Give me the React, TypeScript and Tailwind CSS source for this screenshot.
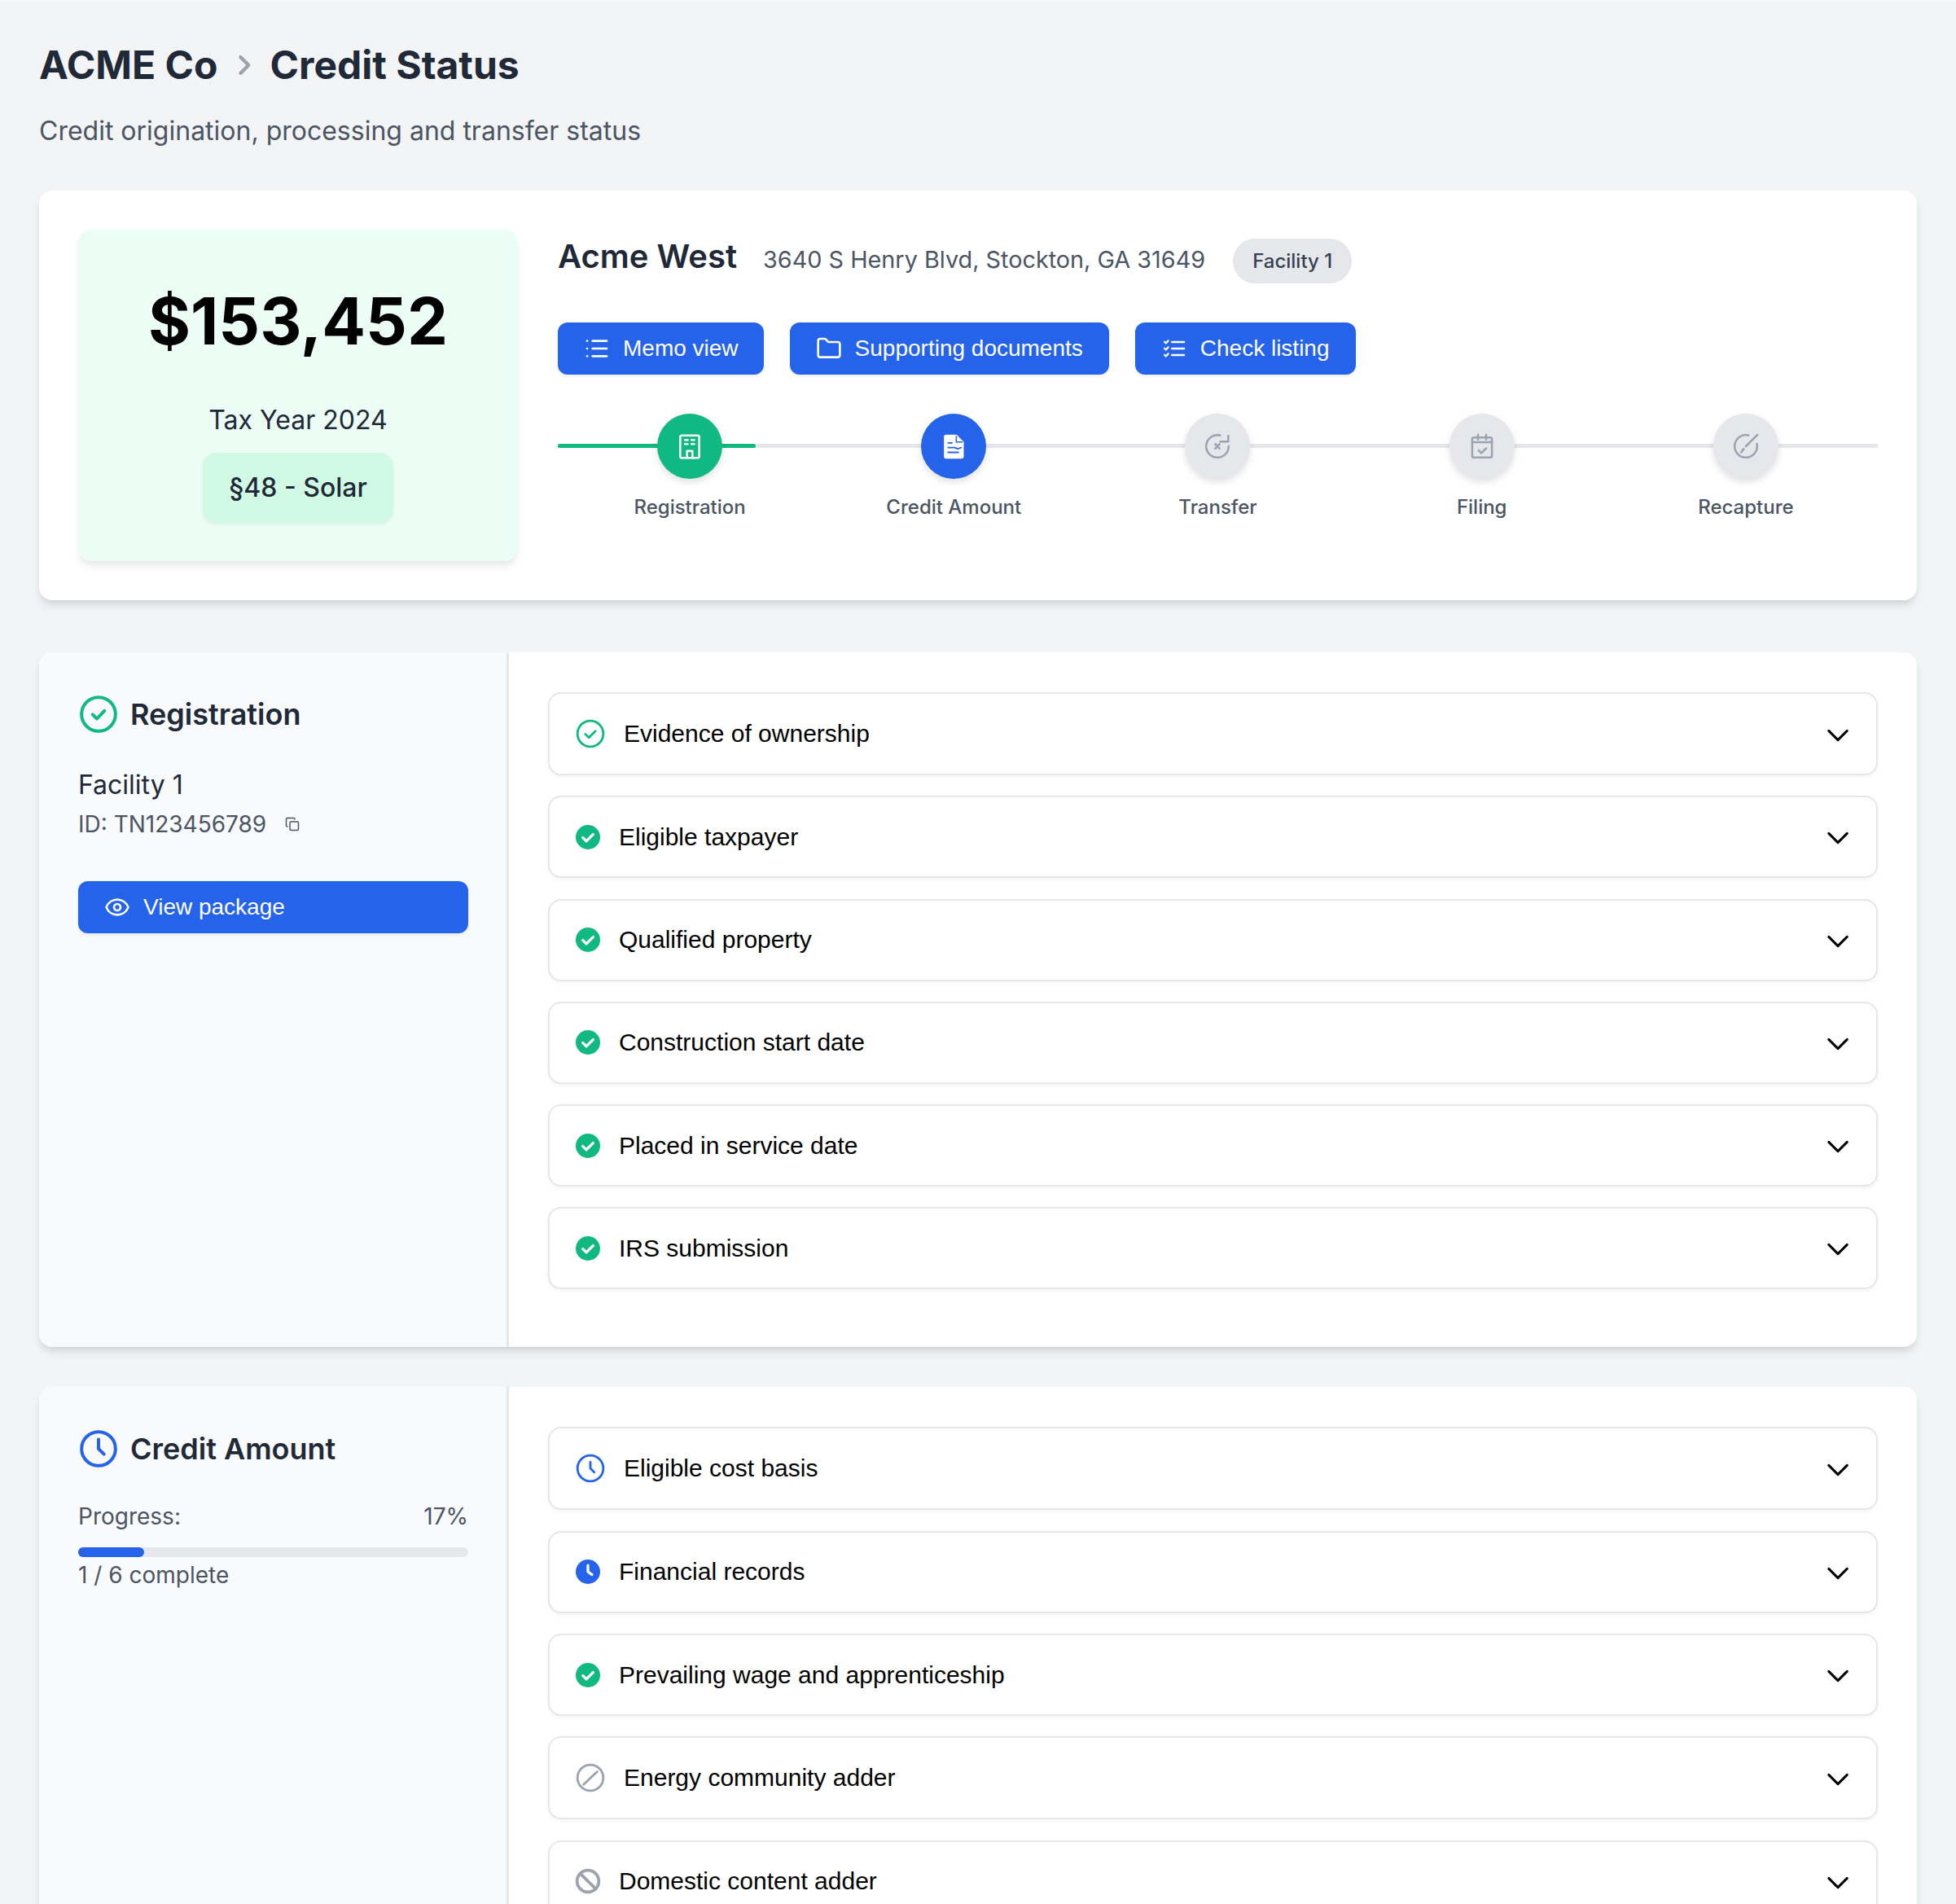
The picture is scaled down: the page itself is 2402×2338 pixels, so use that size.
import React from "react";
import { List, Folder, Eye, Copy } from "lucide-react";

const S = (p: { children: React.ReactNode; className?: string; size?: number; sw?: number }) => (
  <svg
    viewBox="0 0 24 24"
    width={p.size ?? 40}
    height={p.size ?? 40}
    fill="none"
    stroke="currentColor"
    strokeWidth={p.sw ?? 2}
    strokeLinecap="round"
    strokeLinejoin="round"
    className={p.className}
  >
    {p.children}
  </svg>
);

const IconBuilding = () => (
  <S sw={1.5}>
    <rect x="5" y="4" width="14" height="16.500" rx="1" />
    <path d="M8.500 7.300h2M13.300 7.300h2M8.500 10.300h2M13.300 10.300h2" />
    <path d="M10 20.500v-5h4v5" />
  </S>
);
const IconDoc = () => (
  <svg viewBox="0 0 24 24" width="40" height="40">
    <path d="M6.500 4H14l4.900 4.900V19.500a1 1 0 0 1-1 1H6.500a1 1 0 0 1-1-1V5a1 1 0 0 1 1-1z" fill="#fff" stroke="#fff" strokeWidth="1.200" strokeLinejoin="round" />
    <path d="M14 4.300v4.600h4.600" fill="none" stroke="#2563eb" strokeWidth="0.900" />
    <path d="M8 9.500h2.800M8 13h5l2 1 2.500-1M8 16.500h7.500" fill="none" stroke="#2563eb" strokeWidth="1.100" strokeLinecap="round" />
  </svg>
);
const IconTransfer = () => (
  <S sw={1.5}>
    <path d="M20.300 12a8.300 8.300 0 1 1-6.300-8.060" />
    <path d="M20 4.200v4.300h-6" />
    <path d="M10.500 10.500l3 3M13.500 10.500l-3 3" strokeWidth="1.700" />
  </S>
);
const IconCal = () => (
  <S sw={1.5}>
    <rect x="4.750" y="5.500" width="14.500" height="14.750" rx="1" />
    <path d="M9 3.500V7M15 3.500V7M4.750 9h14.500" />
    <path d="M9.500 15l2 2 3.500-3.500" />
  </S>
);
const IconRecap = () => (
  <S sw={1.5}>
    <path d="M14 3.940a8.300 8.300 0 1 0 6.100 6.300" />
    <path d="M20.500 3.500L12 12M10.400 13.800L8.500 16.500" />
  </S>
);
const IconCheckList = () => (
  <S size={32} sw={2}>
    <path d="M10 6h11M10 12h11M10 18h11" />
    <path d="M3 5.800l1.300 1.300L6.500 4.800M3 11.800l1.300 1.300 2.200-2.300M3 17.800l1.300 1.300 2.200-2.300" strokeWidth="1.700" />
  </S>
);

const steps = [
  { label: "Registration", cls: "bg-[#10b981] text-white", icon: <IconBuilding /> },
  { label: "Credit Amount", cls: "bg-[#2563eb] text-white", icon: <IconDoc /> },
  { label: "Transfer", cls: "bg-[#e5e7eb] text-[#9ca3af]", icon: <IconTransfer /> },
  { label: "Filing", cls: "bg-[#e5e7eb] text-[#9ca3af]", icon: <IconCal /> },
  { label: "Recapture", cls: "bg-[#e5e7eb] text-[#9ca3af]", icon: <IconRecap /> },
];

type Kind = "checkO" | "check" | "clockO" | "clock" | "slash" | "ban";

const StatusIcon = ({ kind }: { kind: Kind }) => {
  switch (kind) {
    case "checkO":
      return (
        <S className="shrink-0 text-[#10b981]" sw={1.7}>
          <circle cx="12" cy="12" r="9.500" />
          <path d="M8.300 12.300l2.600 2.500 4.800-4.800" />
        </S>
      );
    case "clockO":
      return (
        <S className="shrink-0 text-[#2563eb]" sw={1.7}>
          <circle cx="12" cy="12" r="9.500" />
          <path d="M12 7.500V12l2.800 2.800" />
        </S>
      );
    case "slash":
      return (
        <S className="shrink-0 text-[#9ca3af]" sw={1.7}>
          <circle cx="12" cy="12" r="9.500" />
          <path d="M7 17L17 7.500" />
        </S>
      );
    case "check":
      return (
        <svg viewBox="0 0 24 24" width="36" height="36" className="shrink-0">
          <circle cx="12" cy="12" r="10" fill="#10b981" />
          <path d="M7.800 12.400l2.900 2.800 5.500-5.500" fill="none" stroke="#fff" strokeWidth="2.200" strokeLinecap="round" strokeLinejoin="round" />
        </svg>
      );
    case "clock":
      return (
        <svg viewBox="0 0 24 24" width="36" height="36" className="shrink-0">
          <circle cx="12" cy="12" r="10" fill="#2563eb" />
          <path d="M12 6.800V12l3.300 2.400" fill="none" stroke="#fff" strokeWidth="2.200" strokeLinecap="round" strokeLinejoin="round" />
        </svg>
      );
    case "ban":
      return (
        <S size={36} sw={2.500} className="shrink-0 text-[#9ca3af]">
          <circle cx="12" cy="12" r="8.900" />
          <path d="M5.700 5.700l12.600 12.600" />
        </S>
      );
  }
};

const Item = ({ kind, label }: { kind: Kind; label: string }) => {
  const outlined = kind === "checkO" || kind === "clockO" || kind === "slash";
  return (
    <div
      className={`flex items-center justify-between rounded-[16px] border-2 border-[#e5e7eb] bg-white pr-[29px] shadow-[0_2px_4px_0_rgba(0,0,0,0.05)] ${
        outlined ? "h-[102px] pl-[30px]" : "h-[101px] pl-[29px]"
      }`}
    >
      <div className={`flex items-center ${outlined ? "gap-[21px]" : "gap-[20px]"}`}>
        <StatusIcon kind={kind} />
        <span className="text-[30px] leading-[44px] text-black font-[family-name:'Liberation_Sans',Arial,sans-serif]">{label}</span>
      </div>
      <svg className="mt-[3px]" viewBox="0 0 24 24" width="36" height="36" fill="none" stroke="#000" strokeWidth="2" strokeLinecap="round" strokeLinejoin="round">
        <path d="M19.500 8.250l-7.500 7.500-7.500-7.500" />
      </svg>
    </div>
  );
};

const Btn = ({ icon, label, full, tight }: { icon: React.ReactNode; label: string; full?: boolean; tight?: boolean }) => (
  <button
    className={`flex h-16 items-center gap-4 rounded-[12px] bg-[#2563eb] pl-8 text-[28px] text-white shadow-[0_2px_4px_0_rgba(0,0,0,0.08)] font-[family-name:'Liberation_Sans',Arial,sans-serif] ${
      tight ? "pr-[31px]" : "pr-8"
    } ${full ? "w-full" : ""}`}
  >
    {icon}
    {label}
  </button>
);

const Section = ({ left, children }: { left: React.ReactNode; children: React.ReactNode }) => (
  <section className="mb-[49px] flex overflow-hidden rounded-[16px] bg-white shadow-[0_8px_12px_-2px_rgba(0,0,0,0.1),0_4px_8px_-4px_rgba(0,0,0,0.1)]">
    <div className="w-[577px] shrink-0 border-r-[3px] border-[#e5e7eb] bg-[#f9fafb] py-12 pl-12 pr-[47px]">{left}</div>
    <div className="flex flex-1 flex-col gap-[25.3px] pb-[71px] pl-12 pr-12 pt-[49px]">{children}</div>
  </section>
);

export default function App() {
  return (
    <div className="h-[2338px] overflow-hidden bg-[#f3f4f6] px-12 pt-12 font-[family-name:Inter,sans-serif] shadow-[inset_0_3px_3px_-2px_rgba(255,255,255,0.8)]">
      <div className="flex h-16 items-center text-[48px] font-bold text-[#1f2937]">
        <span>ACME Co</span>
        <S size={36} sw={3} className="mx-[14px] text-[#9ca3af]">
          <path d="M9 5.500l6.500 6.500L9 18.500" />
        </S>
        <span>Credit Status</span>
      </div>
      <p className="mt-[29px] text-[32px] leading-10 text-[#4b5563]">Credit origination, processing and transfer status</p>

      <div className="mb-16 mt-[53px] flex h-[503px] gap-12 rounded-[16px] bg-white p-12 shadow-[0_8px_12px_-2px_rgba(0,0,0,0.1),0_4px_8px_-4px_rgba(0,0,0,0.1)]">
        <div className="flex h-[407px] w-[540px] shrink-0 flex-col items-center rounded-[16px] bg-[#ecfdf5] pt-[64px] shadow-[0_8px_12px_-2px_rgba(0,0,0,0.08),0_4px_8px_-4px_rgba(0,0,0,0.06)]">
          <div className="text-[79.5px] font-bold leading-[96px] text-black">$153,452</div>
          <div className="mt-[54px] text-[32px] leading-10 text-[#1f2937]">Tax Year 2024</div>
          <div className="mt-[20px] flex h-[86px] w-[234px] items-center justify-center rounded-[16px] bg-[#d1fae5] text-[32px] font-medium text-[#1f2937] shadow-[0_2px_4px_0_rgba(0,0,0,0.06)]">
            §48 - Solar
          </div>
        </div>

        <div className="min-w-0 flex-1 pl-px">
          <div className="mt-[5px] flex items-baseline">
            <span className="text-[40px] font-semibold leading-[56px] text-[#1f2937]">Acme West</span>
            <span className="ml-[32px] text-[28.8px] text-[#4b5563]">3640 S Henry Blvd, Stockton, GA 31649</span>
            <span className="ml-[34px] rounded-full bg-[#e5e7eb] px-6 py-[12px] text-[24px] font-medium leading-[31px] text-[#374151]">Facility 1</span>
          </div>
          <div className="mt-[48px] flex gap-8">
            <Btn tight icon={<List size={32} />} label="Memo view" />
            <Btn icon={<Folder size={32} />} label="Supporting documents" />
            <Btn icon={<IconCheckList />} label="Check listing" />
          </div>
          <div className="relative mt-12">
            <div className="absolute left-0 right-0 top-[37px] h-[5px] bg-[#e5e7eb]" />
            <div className="absolute left-0 top-[37px] h-[5px] w-[243px] rounded-full bg-[#10b981]" />
            <div className="relative grid grid-cols-5">
              {steps.map((s) => (
                <div key={s.label} className="flex flex-col items-center">
                  <div className={`flex h-20 w-20 items-center justify-center rounded-full shadow-[0_4px_8px_0_rgba(0,0,0,0.12)] ${s.cls}`}>{s.icon}</div>
                  <div className="mt-[19px] text-[24px] font-medium leading-8 text-[#4b5563]">{s.label}</div>
                </div>
              ))}
            </div>
          </div>
        </div>
      </div>

      <Section
        left={
          <>
            <div className="flex items-center gap-[14px]">
              <S size={50} className="shrink-0 text-[#10b981]" sw={1.9}>
                <circle cx="12" cy="12" r="10" />
                <path d="M8.500 12.200l2.500 2.500 4.500-4.700" />
              </S>
              <span className="text-[36px] font-semibold leading-[56px] text-[#1f2937]">Registration</span>
            </div>
            <div className="mt-[35px] text-[32px] leading-[48px] text-[#1f2937]">Facility 1</div>
            <div className="mt-[4px] flex items-center text-[28px] leading-10 text-[#4b5563]">
              ID: TN123456789
              <Copy size={18} className="ml-[23px] text-[#4b5563]" />
            </div>
            <div className="mt-[50px]">
              <Btn full icon={<Eye size={32} />} label="View package" />
            </div>
          </>
        }
      >
        <Item kind="checkO" label="Evidence of ownership" />
        <Item kind="check" label="Eligible taxpayer" />
        <Item kind="check" label="Qualified property" />
        <Item kind="check" label="Construction start date" />
        <Item kind="check" label="Placed in service date" />
        <Item kind="check" label="IRS submission" />
      </Section>

      <Section
        left={
          <>
            <div className="flex items-center gap-[14px]">
              <S size={50} className="shrink-0 text-[#2563eb]" sw={1.9}>
                <circle cx="12" cy="12" r="10" />
                <path d="M12 6.500v5.500l3.200 3.200" />
              </S>
              <span className="text-[36px] font-semibold leading-[56px] text-[#1f2937]">Credit Amount</span>
            </div>
            <div className="mt-[35px] flex justify-between text-[28px] leading-10 text-[#4b5563]">
              <span>Progress:</span>
              <span>17%</span>
            </div>
            <div className="mt-[18px] h-3 w-full rounded-full bg-[#e5e7eb]">
              <div className="h-3 w-[17%] rounded-full bg-[#2563eb]" />
            </div>
            <div className="mt-[2px] text-[28px] leading-10 text-[#4b5563]">1 / 6 complete</div>
          </>
        }
      >
        <Item kind="clockO" label="Eligible cost basis" />
        <Item kind="clock" label="Financial records" />
        <Item kind="check" label="Prevailing wage and apprenticeship" />
        <Item kind="slash" label="Energy community adder" />
        <Item kind="ban" label="Domestic content adder" />
      </Section>
    </div>
  );
}
